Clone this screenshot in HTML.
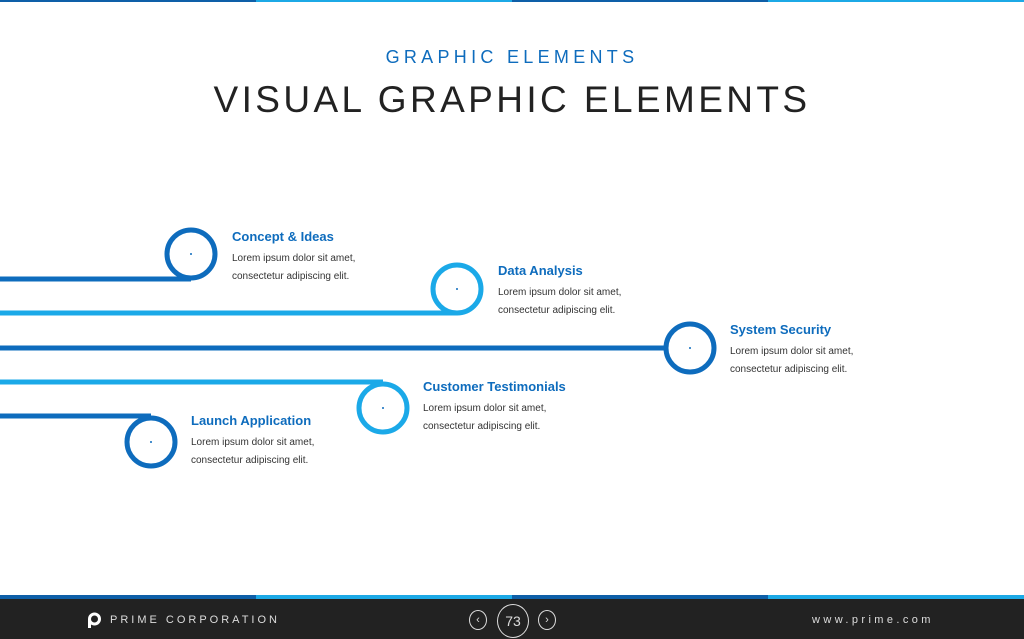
<!DOCTYPE html>
<html><head><style>
body{margin:0;width:1024px;height:639px;overflow:hidden;background:#fff;font-family:"Liberation Sans",sans-serif;position:relative}
.t{position:absolute;white-space:nowrap}
h4{position:absolute;margin:0;font-size:13px;font-weight:bold;color:#0e6cbd;white-space:nowrap}
p{position:absolute;margin:0;font-size:10px;line-height:18px;color:#333;white-space:nowrap}
</style></head><body>
<div style="position:absolute;top:0;left:0;width:1024px;height:2px;background:linear-gradient(90deg,#0e5fa8 0 25%,#1ca9e6 25% 50%,#0e5fa8 50% 75%,#1ca9e6 75%)"></div>
<div class="t" style="left:0;width:1024px;top:47px;text-align:center;font-size:18px;letter-spacing:4.3px;color:#0e6cbd">GRAPHIC ELEMENTS</div>
<div class="t" style="left:0;width:1024px;top:79px;text-align:center;font-size:37px;letter-spacing:3.4px;color:#222">VISUAL GRAPHIC ELEMENTS</div>
<svg style="position:absolute;left:0;top:0" width="1024" height="600">
<g fill="none" stroke-width="5">
<path d="M0 279H191" stroke="#0e6cbd"/><circle cx="191" cy="254" r="24" stroke="#0e6cbd"/>
<path d="M0 313H457" stroke="#1ba9e8"/><circle cx="457" cy="289" r="24" stroke="#1ba9e8"/>
<path d="M0 348H666" stroke="#0e6cbd"/><circle cx="690" cy="348" r="24" stroke="#0e6cbd"/>
<path d="M0 382H383" stroke="#1ba9e8"/><circle cx="383" cy="408" r="24" stroke="#1ba9e8"/>
<path d="M0 416H151" stroke="#0e6cbd"/><circle cx="151" cy="442" r="24" stroke="#0e6cbd"/>
</g>
<g fill="#0e6cbd"><circle cx="191" cy="254" r="1"/><circle cx="457" cy="289" r="1"/><circle cx="690" cy="348" r="1"/><circle cx="383" cy="408" r="1"/><circle cx="151" cy="442" r="1"/></g>
</svg>
<h4 style="left:232px;top:229px">Concept &amp; Ideas</h4><p style="left:232px;top:250px">Lorem ipsum dolor sit amet,<br>consectetur adipiscing elit.</p>
<h4 style="left:498px;top:263px">Data Analysis</h4><p style="left:498px;top:284px">Lorem ipsum dolor sit amet,<br>consectetur adipiscing elit.</p>
<h4 style="left:730px;top:322px">System Security</h4><p style="left:730px;top:343px">Lorem ipsum dolor sit amet,<br>consectetur adipiscing elit.</p>
<h4 style="left:423px;top:379px">Customer Testimonials</h4><p style="left:423px;top:400px">Lorem ipsum dolor sit amet,<br>consectetur adipiscing elit.</p>
<h4 style="left:191px;top:413px">Launch Application</h4><p style="left:191px;top:434px">Lorem ipsum dolor sit amet,<br>consectetur adipiscing elit.</p>
<div style="position:absolute;top:595px;left:0;width:1024px;height:4px;background:linear-gradient(90deg,#0e5fa8 0 25%,#1ca9e6 25% 50%,#0e5fa8 50% 75%,#1ca9e6 75%)"></div>
<div style="position:absolute;top:599px;left:0;width:1024px;height:40px;background:#222"></div>
<svg style="position:absolute;left:87px;top:612px" width="15" height="16"><circle cx="7.5" cy="7" r="5" fill="none" stroke="#fff" stroke-width="3"/><path d="M2.5 7V16" stroke="#fff" stroke-width="3"/></svg>
<div class="t" style="left:110px;top:614px;font-size:11px;letter-spacing:3px;color:#ddd">PRIME CORPORATION</div>
<div style="position:absolute;left:469px;top:610px;width:16px;height:18px;border:1px solid #ddd;border-radius:50%;color:#ddd;font-size:11px;text-align:center;line-height:18px">‹</div>
<div style="position:absolute;left:497px;top:604px;width:30px;height:32px;border:1px solid #ddd;border-radius:50%;color:#ddd;font-size:14px;text-align:center;line-height:32px">73</div>
<div style="position:absolute;left:538px;top:610px;width:16px;height:18px;border:1px solid #ddd;border-radius:50%;color:#ddd;font-size:11px;text-align:center;line-height:18px">›</div>
<div class="t" style="left:812px;top:614px;font-size:11px;letter-spacing:3.4px;color:#ddd">www.prime.com</div>
</body></html>
